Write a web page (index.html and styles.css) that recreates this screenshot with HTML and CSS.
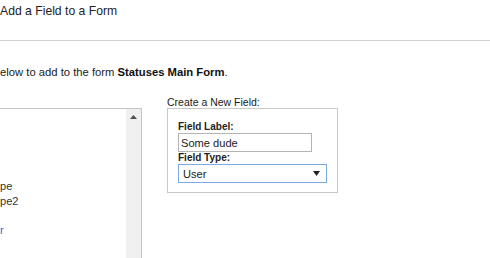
FILE: index.html
```html
<!DOCTYPE html>
<html>
<head>
    <title>Add a Field to a Form</title>
    <link rel="stylesheet" href="styles.css">
</head>
<body>
    <h1>Add a Field to a Form</h1>
    <hr>
    <p class="intro">elow to add to the form <b>Statuses Main Form</b>.</p>

    <div class="layout">
        <div class="listbox">
            <div class="items">
                <div class="item">pe</div>
                <div class="item">pe2</div>
                <div class="item">&nbsp;</div>
                <div class="item link">r</div>
            </div>
            <div class="scrollbar">
                <svg width="7" height="4" viewBox="0 0 7 4"><path d="M3.5 0 L7 4 L0 4 Z" fill="#505050"/></svg>
            </div>
        </div>

        <div class="new-field">
            <div class="caption">Create a New Field:</div>
            <div class="box">
                <label class="lbl">Field Label:</label>
                <input type="text" class="text" value="Some dude">
                <label class="lbl">Field Type:</label>
                <div class="select">
                    <span>User</span>
                    <svg width="7" height="5" viewBox="0 0 7 5"><path d="M0 0 L7 0 L3.5 5 Z" fill="#222"/></svg>
                </div>
            </div>
        </div>
    </div>
</body>
</html>
```

FILE: styles.css
```css
html, body { margin: 0; padding: 0; background: #fff; }
body { font-family: "Liberation Sans", Arial, sans-serif; color: #222; overflow: hidden; height: 258px; }
h1 { font-size: 12.2px; font-weight: normal; line-height: 14px; margin: 0; padding-top: 4px; color: #222; }
hr { border: 0; border-top: 1px solid #cfcfcf; margin: 22px 0 0 0; height: 0; }
.intro { font-size: 11.25px; line-height: 13px; margin: 25px 0 0 0; }
.intro b { color: #111; }

.layout { display: flex; align-items: flex-start; margin-top: 17px; }

.listbox { width: 141px; height: 160px; margin-top: 12px; border: 1px solid #c4c4c4; border-left: 0; display: flex; }
.items { flex: 1; padding-top: 70px; font-size: 11.1px; line-height: 14.5px; color: #333; }
.item.link { color: #1f73d8; }
.scrollbar { width: 15px; background: #f0f0f0; display: flex; justify-content: center; padding-top: 6px; box-sizing: border-box; }

.new-field { margin-left: 25px; }
.caption { font-size: 10.5px; line-height: 12px; color: #1a1a1a; }
.box { width: 171px; box-sizing: border-box; border: 1px solid #c8c8c8; padding: 12px 10px 9px 10px; }
.lbl { display: block; font-size: 10px; line-height: 12px; font-weight: bold; color: #222; }
.text { display: block; box-sizing: border-box; width: 134px; height: 19px; margin: 0; padding: 0 2px; border: 1px solid #b4b4b4; font-family: "Liberation Sans", Arial, sans-serif; font-size: 11.1px; color: #222; outline: none; }
.select { box-sizing: border-box; width: 149px; height: 19px; border: 1px solid #7fa8e6; padding: 0 6px 0 4px; display: flex; align-items: center; justify-content: space-between; font-size: 11.1px; }
```
